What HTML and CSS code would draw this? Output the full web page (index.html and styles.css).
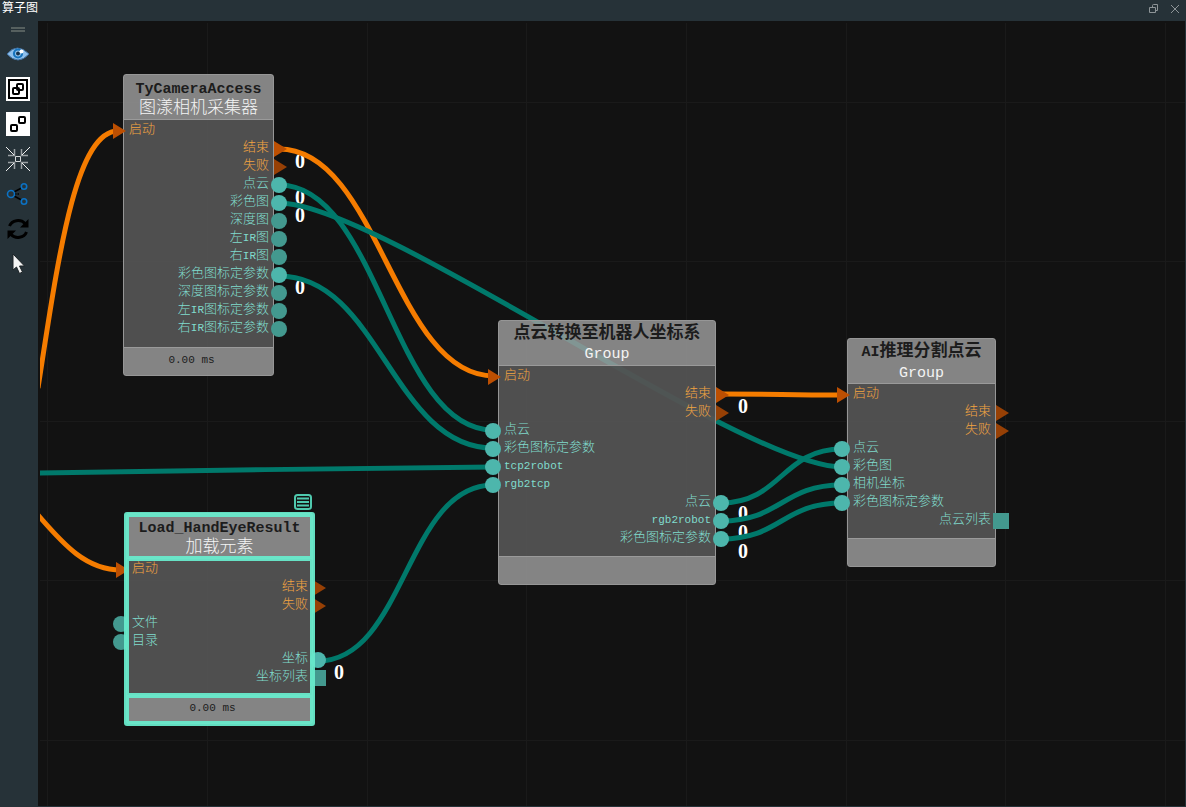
FILE: index.html
```html
<!DOCTYPE html>
<html lang="zh-CN">
<head>
<meta charset="utf-8">
<title>算子图</title>
<link rel="stylesheet" href="styles.css">
</head>
<body>
<div class="dock">
  <header class="dock-title">
    <h1>算子图</h1>
    <div class="dock-actions">
      <button type="button" aria-label="浮动"><svg width="10" height="10" viewBox="0 0 10 10"><path d="M3.500 3V1.500Q3.500 .5 4.500 .5H8.500V6.500H6.500M.5 3.500H6.500V8.500H.5Z"/></svg></button>
      <button type="button" aria-label="关闭"><svg width="10" height="10" viewBox="0 0 10 10"><path d="M1 1L9 9M9 1L1 9"/></svg></button>
    </div>
  </header>
  <div class="dock-main">
    <nav class="tools" aria-label="工具栏">
      <div class="handle"></div>
      <button type="button" aria-label="预览"><svg viewBox="0 0 24 24"><path d="M1 12Q11 0 23 12Q12 24 1 12Z" fill="#8fc0ec" stroke="#3f6f9f"/><circle cx="12" cy="11.500" r="4" fill="#9cc8ee" stroke="#1673bd" stroke-width="2.200"/><circle cx="12" cy="11.500" r="2" fill="#16334c"/><circle cx="15.500" cy="9.500" r="2" fill="#fff"/></svg></button>
      <button type="button" aria-label="编组"><svg viewBox="0 0 24 24"><path fill="#fff" d="M0 0H24V24H0Z"/><g fill="none" stroke="#000" stroke-width="2"><path d="M3 3H21V21H3Z"/><rect x="7" y="11" width="6" height="6" rx="1"/><rect x="11" y="7" width="6" height="6" rx="1"/></g></svg></button>
      <button type="button" aria-label="取消编组"><svg viewBox="0 0 24 24"><path fill="#fff" d="M0 0H24V24H0Z"/><g fill="none" stroke="#000" stroke-width="2"><rect x="5" y="13" width="6" height="6" rx="1"/><rect x="13" y="5" width="6" height="6" rx="1"/></g></svg></button>
      <button type="button" aria-label="居中"><svg viewBox="0 0 24 24" fill="none"><path stroke="#9aa0a3" stroke-width="1.500" d="M8.500 2V8.500H2M15.500 2V8.500H22M8.500 22V15.500H2M15.500 22V15.500H22"/><path stroke="#f2f2f2" d="M0 0L8 8M24 0L16 8M0 24L8 16M24 24L16 16"/><path stroke="#d5d8d9" d="M9.500 9.500H14.500V14.500H9.500Z"/></svg></button>
      <button type="button" aria-label="分支"><svg viewBox="0 0 24 24" fill="none"><path stroke="#000" stroke-width="1.500" d="M8 10L15.500 6M8 14L15.500 18"/><path stroke="#000" stroke-width="1.500" stroke-dasharray="1.500 1" d="M9 12H14"/><g stroke="#0b72c4" stroke-width="1.600"><circle cx="5" cy="12" r="3.500"/><circle cx="18" cy="4.500" r="2.700"/><circle cx="18" cy="19.500" r="2.700"/></g></svg></button>
      <button type="button" aria-label="刷新"><svg viewBox="0 0 24 24"><g fill="none" stroke="#000" stroke-width="3"><path d="M3.500 9A9 8 0 0 1 19 6.500"/><path d="M20.500 15A9 8 0 0 1 5 17.500"/></g><path d="M22.500 2V10.500H14ZM1.500 22V13.500H10Z"/></svg></button>
      <button type="button" aria-label="选择"><svg viewBox="0 0 24 24"><path d="M7 2V18L10.500 15L13.500 21.500L16.500 20L13.500 14H18.500Z" fill="#f4f4f4" stroke="#1c2326"/></svg></button>
    </nav>
    <main class="canvas">
      <svg class="scene" width="100%" height="100%" aria-hidden="true">
        <g transform="translate(-40 -23)">
          <path class="grid" d="M47.500 0V4000M207.500 0V4000M367.500 0V4000M526.500 0V4000M686.500 0V4000M846.500 0V4000M1005.500 0V4000M1165.500 0V4000M0 102.500H4000M0 261.500H4000M0 421.500H4000M0 580.500H4000M0 740.500H4000"/>
          <g class="counts">
            <text x="300" y="168">0</text><text x="300" y="204">0</text><text x="300" y="222">0</text><text x="300" y="294">0</text>
            <text x="743" y="413">0</text><text x="743" y="520">0</text><text x="743" y="539">0</text><text x="743" y="558">0</text>
            <text x="339" y="679">0</text>
          </g>
          <g class="wire flow">
            <path d="M38 388C58 260 75 131 118 131"/>
            <path d="M38 515C60 540 84 570 121 570"/>
            <path d="M279 149C379 149 394 376 494 376"/>
            <path d="M721 394C781 394 782 395 842 395"/>
          </g>
          <g class="wire data">
            <path d="M279 185C379 185 393 430 493 430"/>
            <path d="M279 203C379 203 742 467 842 467"/>
            <path d="M279 276C379 276 393 448 493 448"/>
            <path d="M38 473C138 472 393 467 493 467"/>
            <path d="M318 661C405 661 406 485 493 485"/>
            <path d="M721 503C781 503 782 449 842 449"/>
            <path d="M721 521C781 521 782 485 842 485"/>
            <path d="M721 539C781 539 782 503 842 503"/>
          </g>
        </g>
      </svg>

      <section class="node node-camera">
        <div class="node-head"><h2><span class="en">TyCameraAccess</span></h2><p>图漾相机采集器</p></div>
        <ul class="ports">
          <li class="in exec">启动<i class="tri on"></i></li>
          <li class="out exec">结束<i class="tri on"></i></li>
          <li class="out exec">失败<i class="tri"></i></li>
          <li class="out">点云<i class="dot on"></i></li>
          <li class="out">彩色图<i class="dot on"></i></li>
          <li class="out">深度图<i class="dot"></i></li>
          <li class="out">左<span class="en">IR</span>图<i class="dot"></i></li>
          <li class="out">右<span class="en">IR</span>图<i class="dot"></i></li>
          <li class="out">彩色图标定参数<i class="dot on"></i></li>
          <li class="out">深度图标定参数<i class="dot"></i></li>
          <li class="out">左<span class="en">IR</span>图标定参数<i class="dot"></i></li>
          <li class="out">右<span class="en">IR</span>图标定参数<i class="dot"></i></li>
        </ul>
        <div class="node-foot">0.00 ms</div>
      </section>

      <section class="node group node-transform">
        <div class="node-head"><h2>点云转换至机器人坐标系</h2><p><span class="en">Group</span></p></div>
        <ul class="ports">
          <li class="in exec">启动<i class="tri on"></i></li>
          <li class="out exec">结束<i class="tri on"></i></li>
          <li class="out exec">失败<i class="tri"></i></li>
          <li class="in">点云<i class="dot on"></i></li>
          <li class="in">彩色图标定参数<i class="dot on"></i></li>
          <li class="in"><span class="en">tcp2robot</span><i class="dot on"></i></li>
          <li class="in"><span class="en">rgb2tcp</span><i class="dot on"></i></li>
          <li class="out">点云<i class="dot on"></i></li>
          <li class="out"><span class="en">rgb2robot</span><i class="dot on"></i></li>
          <li class="out">彩色图标定参数<i class="dot on"></i></li>
        </ul>
        <div class="node-foot"></div>
      </section>

      <section class="node group node-ai">
        <div class="node-head"><h2><span class="en">AI</span>推理分割点云</h2><p><span class="en">Group</span></p></div>
        <ul class="ports">
          <li class="in exec">启动<i class="tri on"></i></li>
          <li class="out exec">结束<i class="tri"></i></li>
          <li class="out exec">失败<i class="tri"></i></li>
          <li class="in">点云<i class="dot on"></i></li>
          <li class="in">彩色图<i class="dot on"></i></li>
          <li class="in">相机坐标<i class="dot on"></i></li>
          <li class="in">彩色图标定参数<i class="dot on"></i></li>
          <li class="out">点云列表<i class="sq"></i></li>
        </ul>
        <div class="node-foot"></div>
      </section>

      <section class="node selected node-load">
        <button class="node-menu" type="button" aria-label="菜单"><svg width="18" height="16" viewBox="0 0 18 16"><rect x="1" y="1" width="16" height="14" rx="2.500"/><path d="M3 4.500H15M3 8H15M3 11.500H15"/></svg></button>
        <div class="node-head"><h2><span class="en">Load_HandEyeResult</span></h2><p>加载元素</p></div>
        <ul class="ports">
          <li class="in exec">启动<i class="tri on"></i></li>
          <li class="out exec">结束<i class="tri"></i></li>
          <li class="out exec">失败<i class="tri"></i></li>
          <li class="in">文件<i class="dot"></i></li>
          <li class="in">目录<i class="dot"></i></li>
          <li class="out">坐标<i class="dot on"></i></li>
          <li class="out">坐标列表<i class="sq"></i></li>
        </ul>
        <div class="node-foot">0.00 ms</div>
      </section>
    </main>
  </div>
</div>
</body>
</html>
```

FILE: styles.css
```css
* { box-sizing: border-box; }

body {
  margin: 0;
  background: #263238;
  color: #fff;
  font-family: "Noto Sans CJK SC", sans-serif;
}

h1, h2, p, ul { margin: 0; padding: 0; font-weight: 400; }

button {
  display: block;
  padding: 0;
  border: 0;
  background: none;
  color: inherit;
}

button svg { display: block; }

.dock {
  display: flex;
  flex-direction: column;
  min-height: 100vh;
}

.dock-title {
  display: flex;
  justify-content: space-between;
  align-items: flex-start;
  height: 21px;
  padding: 0 6px 0 2px;
}

.dock-title h1 {
  font-size: 12px;
  line-height: 14px;
}

.dock-actions { display: flex; gap: 11px; padding-top: 4px; }
.dock-actions svg { fill: none; stroke: #8d9497; stroke-width: 1; }

.dock-main { display: flex; flex: 1; }

.tools {
  display: flex;
  flex-direction: column;
  align-items: center;
  gap: 11px;
  width: 38px;
  padding: 6px 2px 0 0;
}

.tools svg { width: 24px; height: 24px; }

.handle {
  width: 14px;
  height: 5px;
  margin-bottom: -1px;
  border: solid #56605f;
  border-width: 2px 0;
}

.canvas {
  position: relative;
  flex: 1;
  margin: 0 1px 1px 0;
  border: solid #121212;
  border-width: 2px 0 0 2px;
  background: #121212;
  overflow: hidden;
}

.scene { position: absolute; inset: 0; }
.grid { stroke: #1a1a1a; fill: none; }

.counts {
  fill: #fff;
  font: bold 20px "Liberation Serif", serif;
  text-anchor: middle;
}

.wire { fill: none; stroke-width: 5; }
.flow { stroke: #f57c00; }
.data { stroke: #00796b; }

.en { font-family: "Liberation Mono", monospace; }

.node {
  position: absolute;
  border: 1px solid #969696;
  border-radius: 3px;
}

.node-camera { left: 83px; top: 51px; width: 151px; }
.node-transform { left: 458px; top: 297px; width: 218px; }
.node-ai { left: 807px; top: 315px; width: 149px; }
.node-load { left: 86px; top: 490px; width: 187px; }

.node-head {
  height: 45px;
  padding-top: 2px;
  border-bottom: 1px solid #9a9a9a;
  background: rgba(155, 155, 155, 0.83);
  text-align: center;
  white-space: nowrap;
}

.node-head h2 {
  color: #1c1c1c;
  font-size: 17px;
  font-weight: 700;
  line-height: 18px;
}

.node-head p {
  color: #f4f4f4;
  font-size: 17px;
  font-weight: 300;
  line-height: 17px;
}

.node-head .en { font-size: 15px; line-height: 1; }

.group .node-head { padding-top: 0; }
.group .node-head h2 { line-height: 20px; }
.group .node-head p { line-height: 20px; }

.ports {
  padding-bottom: 10px;
  background: rgba(83, 83, 83, 0.95);
  color: #80dccd;
  font-size: 13px;
  font-weight: 300;
  line-height: 16px;
  list-style: none;
}

.ports li {
  position: relative;
  height: 18px;
  padding: 0 4px 0 5px;
  white-space: nowrap;
}

.ports .en { font-size: 11px; line-height: 1; }
.ports .out { text-align: right; }
.ports .exec { color: #f3a441; }

.ports i {
  position: absolute;
  top: 3px;
  width: 16px;
  height: 16px;
  background: #43998f;
}

.ports .in i { left: -14px; }
.ports .out i { right: -14px; }
.ports .dot { border-radius: 50%; }
.ports .on { background: #4db6ac; }

.ports .tri {
  width: 13px;
  background: #974005;
  clip-path: polygon(0 0, 100% 50%, 0 100%);
}

.ports .tri.on { background: #bc4f02; }
.ports .in .tri { left: -11px; }

.node-foot {
  height: 28px;
  padding-right: 14px;
  border-top: 1px solid #9a9a9a;
  background: rgba(155, 155, 155, 0.83);
  color: #1c1c1c;
  font: 11px/24px "Liberation Mono", monospace;
  text-align: center;
}

.node-camera .ports { padding-bottom: 11px; }

.selected::before,
.selected::after {
  content: "";
  position: absolute;
  z-index: 1;
  left: -3px;
  right: -3px;
  border: 5px solid rgba(104, 234, 203, 0.95);
  pointer-events: none;
}

.selected::before { top: -2px; bottom: -3px; border-radius: 3px; }
.selected::after { top: 42px; bottom: 25px; border-width: 5px 0; left: 2px; right: 2px; }

.node-menu {
  position: absolute;
  right: 0;
  top: -20px;
}

.node-menu svg { fill: none; stroke: #4fc9ae; stroke-width: 2; }
```
